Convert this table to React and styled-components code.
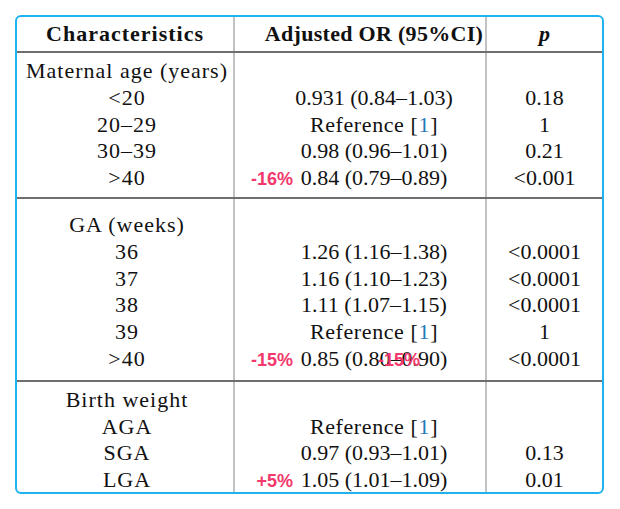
import React from "react";
import styled, { createGlobalStyle } from "styled-components";

const GlobalStyle = createGlobalStyle`
  body {
    margin: 0;
    background: #ffffff;
    font-family: "Liberation Serif", "Times New Roman", serif;
    color: #111111;
  }
`;

const sections = [
  {
    title: "Maternal age (years)",
    padTop: 5,
    padBottom: 5,
    rows: [
      { label: "<20", or: "0.931 (0.84–1.03)", p: "0.18" },
      { label: "20–29", ref: true, p: "1" },
      { label: "30–39", or: "0.98 (0.96–1.01)", p: "0.21" },
      { label: ">40", or: "0.84 (0.79–0.89)", p: "<0.001", tags: [{ text: "-16%", right: 58 }] },
    ],
  },
  {
    title: "GA (weeks)",
    padTop: 13,
    padBottom: 7,
    rows: [
      { label: "36", or: "1.26 (1.16–1.38)", p: "<0.0001" },
      { label: "37", or: "1.16 (1.10–1.23)", p: "<0.0001" },
      { label: "38", or: "1.11 (1.07–1.15)", p: "<0.0001" },
      { label: "39", ref: true, p: "1" },
      {
        label: ">40",
        or: "0.85 (0.80–0.90)",
        p: "<0.0001",
        tags: [
          { text: "-15%", right: 58 },
          { text: "-15%", right: 185 },
        ],
      },
    ],
  },
  {
    title: "Birth weight",
    padTop: 5,
    padBottom: 0,
    height: 110,
    last: true,
    rows: [
      { label: "AGA", ref: true, p: "" },
      { label: "SGA", or: "0.97 (0.93–1.01)", p: "0.13" },
      { label: "LGA", or: "1.05 (1.01–1.09)", p: "0.01", tags: [{ text: "+5%", right: 58 }] },
    ],
  },
];

const App = () => {
  return (
    <>
      <GlobalStyle />
      <Card>
        <HeaderRow>
          <HeadCell $width={216} $spacing={1}>Characteristics</HeadCell>
          <HeadCell $width={222} $shift={28} $spacing={0.3}>
            Adjusted OR (95%CI)
          </HeadCell>
          <HeadCell $width={115} $last>
            <i>p</i>
          </HeadCell>
        </HeaderRow>
        {sections.map((s) => (
          <Section key={s.title} $last={s.last} $height={s.height}>
            <Column $width={216} $top={s.padTop} $bottom={s.padBottom} $shift={4} $spacing={1}>
              <Line>{s.title}</Line>
              {s.rows.map((r) => (
                <Line key={r.label}>{r.label}</Line>
              ))}
            </Column>
            <Column $width={250} $top={s.padTop} $bottom={s.padBottom} $shift={28}>
              <Line>&nbsp;</Line>
              {s.rows.map((r) => (
                <Line key={r.label}>
                  {r.ref ? (
                    <RefText>
                      Reference [<Cite>1</Cite>]
                    </RefText>
                  ) : (
                    r.or
                  )}
                  {r.tags &&
                    r.tags.map((t, i) => (
                      <Tag key={i} $right={t.right}>
                        {t.text}
                      </Tag>
                    ))}
                </Line>
              ))}
            </Column>
            <Column $width={115} $top={s.padTop} $bottom={s.padBottom} $last>
              <Line>&nbsp;</Line>
              {s.rows.map((r) => (
                <Line key={r.label}>{r.p || "\u00a0"}</Line>
              ))}
            </Column>
          </Section>
        ))}
      </Card>
    </>
  );
};

export default App;

const Card = styled.div`
  margin: 15px 0 0 15px;
  width: 585px;
  border: 2px solid #1eb2ee;
  border-radius: 6px;
  overflow: hidden;
  background: #ffffff;
`;

const HeaderRow = styled.div`
  display: flex;
  height: 34px;
  border-bottom: 2px solid #6e6e6e;
`;

const HeadCell = styled.div`
  width: ${(p) => p.$width}px;
  display: flex;
  align-items: center;
  justify-content: center;
  padding-left: ${(p) => p.$shift || 0}px;
  margin-right: ${(p) => (p.$last ? 0 : 2)}px;
  box-shadow: ${(p) => (p.$last ? "none" : "2px 0 0 #c2c2c2")};
  font-weight: bold;
  font-size: 22px;
  letter-spacing: ${(p) => p.$spacing || 0}px;
  white-space: nowrap;
  i {
    font-style: italic;
  }
`;

const Section = styled.div`
  display: flex;
  height: ${(p) => (p.$height ? `${p.$height}px` : "auto")};
  overflow: hidden;
  border-bottom: ${(p) => (p.$last ? "none" : "2px solid #6e6e6e")};
`;

const Column = styled.div`
  width: ${(p) => p.$width - (p.$shift || 0)}px;
  padding: ${(p) => p.$top}px 0 ${(p) => p.$bottom}px ${(p) => p.$shift || 0}px;
  border-right: ${(p) => (p.$last ? "none" : "2px solid #c2c2c2")};
  display: flex;
  flex-direction: column;
  letter-spacing: ${(p) => p.$spacing || 0}px;
`;

const Line = styled.div`
  position: relative;
  height: 26.8px;
  line-height: 26.8px;
  font-size: 22px;
  text-align: center;
  white-space: nowrap;
`;

const RefText = styled.span`
  letter-spacing: 0.6px;
`;

const Cite = styled.span`
  color: #2678b8;
`;

const Tag = styled.span`
  position: absolute;
  top: 0;
  left: -28px;
  width: ${(p) => p.$right}px;
  text-align: right;
  font-family: "Liberation Sans", Arial, sans-serif;
  font-weight: bold;
  font-size: 18px;
  letter-spacing: 0;
  color: #f2386c;
  line-height: 28px;
`;
